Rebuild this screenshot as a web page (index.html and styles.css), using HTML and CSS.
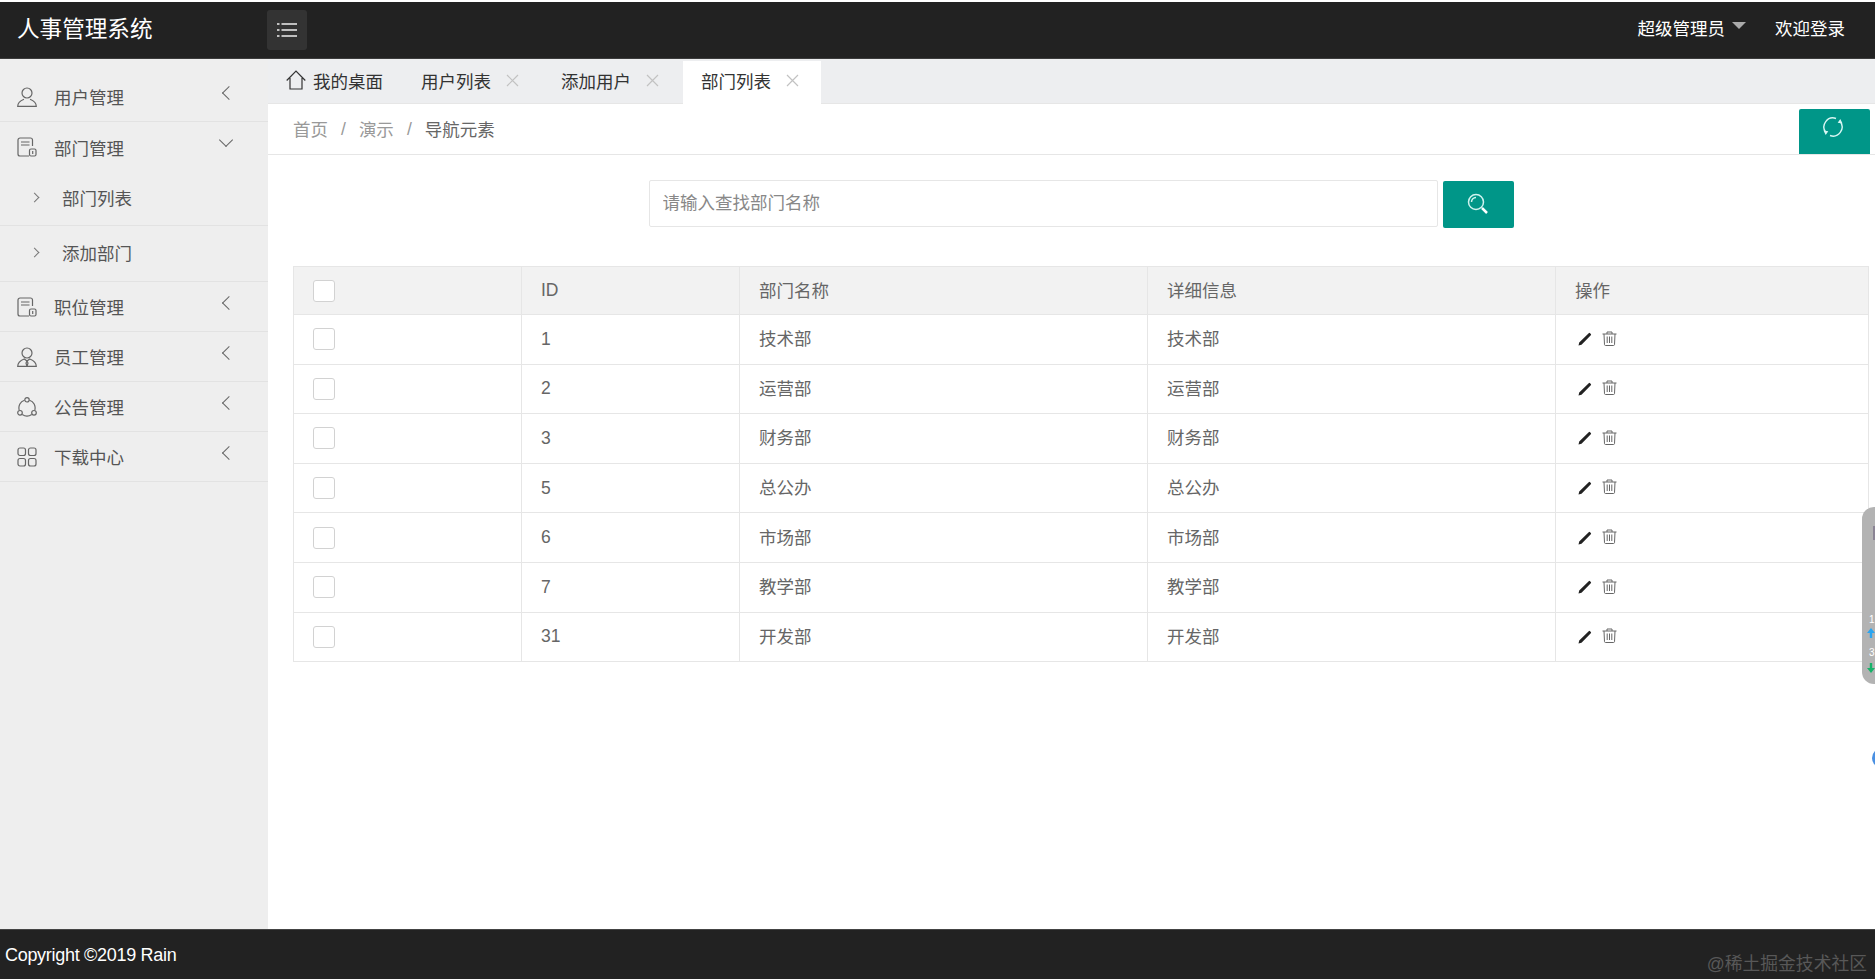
FILE: index.html
```html
<!DOCTYPE html>
<html lang="zh-CN">
  <head>
    <meta charset="UTF-8" />
    <title>人事管理系统</title>
    <link rel="stylesheet" href="styles.css">
  </head>
  <body>
    <svg class="sprite" xmlns="http://www.w3.org/2000/svg">
      <symbol id="i-user" viewBox="0 0 20 20"><circle cx="10" cy="6" r="5"/><path d="M7 12.200C3.900 13.400.7 15.400.7 19.400h18.600c0-4-3.200-6-6.300-7.200"/></symbol>
      <symbol id="i-doc" viewBox="0 0 20 20"><path d="M15.500 9V3a2 2 0 0 0-2-2H3a2 2 0 0 0-2 2v14a2 2 0 0 0 2 2h9M4 5h8.500M4 8h8.500"/><rect x="12.500" y="12" width="6.500" height="7" rx="1.500"/><path d="M15.700 14v3"/></symbol>
      <symbol id="i-staff" viewBox="0 0 20 20"><circle cx="10" cy="6" r="5"/><path d="M.7 19.400c0-4 3-6 6.500-7.400L10 14l2.800-2c3.500 1.400 6.500 3.400 6.500 7.400zM10 14l-1 2 1 3.400 1-3.400z"/></symbol>
      <symbol id="i-share" viewBox="0 0 20 20"><path d="M7.500 3.200A8 8 0 0 0 2.200 13M12.500 3.200A8 8 0 0 1 17.800 13M5.300 17.500a8 8 0 0 0 9.400 0"/><circle cx="10" cy="2.800" r="2.200"/><circle cx="3" cy="15.800" r="2.300"/><circle cx="17" cy="15.800" r="2.300"/></symbol>
      <symbol id="i-grid" viewBox="0 0 20 20"><rect x="1" y="1" width="7.500" height="7.500" rx="2"/><rect x="11.500" y="1" width="7.500" height="7.500" rx="2"/><rect x="1" y="11.500" width="7.500" height="7.500" rx="2"/><rect x="11.500" y="11.500" width="7.500" height="7.500" rx="2"/></symbol>
      <symbol id="i-close" viewBox="0 0 13 13"><path d="M1 1l11 11M12 1L1 12"/></symbol>
      <symbol id="i-pencil" viewBox="0 0 14 14"><path d="M.5 13.500l.7-3L10.700 1.200a1 1 0 0 1 1.400 0l.7.700a1 1 0 0 1 0 1.400L3.500 12.800z"/></symbol>
      <symbol id="i-trash" viewBox="0 0 15 15"><path d="M.5 3h14M5 3V1h5v2M2 3l.5 10.700a1 1 0 0 0 1 .8h8a1 1 0 0 0 1-.8L13 3M5.200 5.500v6.500M7.500 5.500v6.500M9.800 5.500v6.500"/></symbol>
    </svg>

    <header class="topbar">
      <div class="logo">人事管理系统</div>
      <button class="menu-toggle" type="button">
        <svg width="20" height="14" viewBox="0 0 20 14"><path d="M0 1h2.500M4.500 1H20M0 7h2.500M4.500 7H20M0 13h2.500M4.500 13H20"/></svg>
      </button>
      <div class="topbar-right">
        <span class="admin">超级管理员<i class="caret"></i></span>
        <span>欢迎登录</span>
      </div>
    </header>

    <div class="main">
      <aside class="sidebar">
        <ul class="nav">
          <li class="nav-item">
            <svg class="nav-icon"><use href="#i-user"/></svg><span>用户管理</span><i class="arrow arrow-left"></i>
          </li>
          <li class="nav-item nav-open">
            <svg class="nav-icon"><use href="#i-doc"/></svg><span>部门管理</span><i class="arrow arrow-down"></i>
          </li>
          <li class="sub-item sub-first"><i class="arrow-small"></i><span>部门列表</span></li>
          <li class="sub-item sub-last"><i class="arrow-small"></i><span>添加部门</span></li>
          <li class="nav-item">
            <svg class="nav-icon"><use href="#i-doc"/></svg><span>职位管理</span><i class="arrow arrow-left"></i>
          </li>
          <li class="nav-item">
            <svg class="nav-icon"><use href="#i-staff"/></svg><span>员工管理</span><i class="arrow arrow-left"></i>
          </li>
          <li class="nav-item">
            <svg class="nav-icon"><use href="#i-share"/></svg><span>公告管理</span><i class="arrow arrow-left"></i>
          </li>
          <li class="nav-item">
            <svg class="nav-icon"><use href="#i-grid"/></svg><span>下载中心</span><i class="arrow arrow-left"></i>
          </li>
        </ul>
      </aside>

      <section class="content">
        <ul class="tabs">
          <li class="tab tab-home">
            <svg class="home-icon" width="20" height="20" viewBox="0 0 20 20"><path d="M.7 10.500L10 1l9.300 9.500M4 8v11h12V8"/></svg>我的桌面
          </li>
          <li class="tab">用户列表<svg class="tab-close"><use href="#i-close"/></svg></li>
          <li class="tab">添加用户<svg class="tab-close"><use href="#i-close"/></svg></li>
          <li class="tab tab-active">部门列表<svg class="tab-close"><use href="#i-close"/></svg></li>
        </ul>

        <div class="crumbs">
          <span class="crumb">首页</span><span class="crumb-sep">/</span>
          <span class="crumb">演示</span><span class="crumb-sep">/</span>
          <span class="crumb crumb-last">导航元素</span>
          <a class="refresh">
            <svg width="22" height="22" viewBox="0 0 22 22"><path d="M3.700 16.300A9 9 0 0 1 14 2.500M18.300 5.700A9 9 0 0 1 8 19.500"/><path class="solid" d="M1.500 14.500l4.800.8-2.600 3.700zM20.500 7.500l-4.800-.8 2.600-3.700z"/></svg>
          </a>
        </div>

        <div class="page">
          <form class="search">
            <input class="search-input" type="text" placeholder="请输入查找部门名称" />
            <button class="search-btn" type="button">
              <svg width="22" height="22" viewBox="0 0 22 22"><circle cx="9" cy="9" r="7.500"/><path class="handle" d="M15 15l5 5"/><path d="M4.500 9A4.500 4.500 0 0 1 9 4.500"/></svg>
            </button>
          </form>

          <table class="grid">
            <colgroup>
              <col class="col-check"><col class="col-id"><col class="col-text"><col class="col-text"><col>
            </colgroup>
            <thead>
              <tr>
                <th class="plain"><i class="check"></i></th>
                <th class="plain">ID</th>
                <th>部门名称</th>
                <th>详细信息</th>
                <th>操作</th>
              </tr>
            </thead>
            <tbody>
              <tr>
                <td class="plain"><i class="check"></i></td><td class="plain">1</td><td>技术部</td><td>技术部</td>
                <td class="actions plain"><svg class="icon-edit"><use href="#i-pencil"/></svg><svg class="icon-del"><use href="#i-trash"/></svg></td>
              </tr>
              <tr>
                <td class="plain"><i class="check"></i></td><td class="plain">2</td><td>运营部</td><td>运营部</td>
                <td class="actions plain"><svg class="icon-edit"><use href="#i-pencil"/></svg><svg class="icon-del"><use href="#i-trash"/></svg></td>
              </tr>
              <tr>
                <td class="plain"><i class="check"></i></td><td class="plain">3</td><td>财务部</td><td>财务部</td>
                <td class="actions plain"><svg class="icon-edit"><use href="#i-pencil"/></svg><svg class="icon-del"><use href="#i-trash"/></svg></td>
              </tr>
              <tr>
                <td class="plain"><i class="check"></i></td><td class="plain">5</td><td>总公办</td><td>总公办</td>
                <td class="actions plain"><svg class="icon-edit"><use href="#i-pencil"/></svg><svg class="icon-del"><use href="#i-trash"/></svg></td>
              </tr>
              <tr>
                <td class="plain"><i class="check"></i></td><td class="plain">6</td><td>市场部</td><td>市场部</td>
                <td class="actions plain"><svg class="icon-edit"><use href="#i-pencil"/></svg><svg class="icon-del"><use href="#i-trash"/></svg></td>
              </tr>
              <tr>
                <td class="plain"><i class="check"></i></td><td class="plain">7</td><td>教学部</td><td>教学部</td>
                <td class="actions plain"><svg class="icon-edit"><use href="#i-pencil"/></svg><svg class="icon-del"><use href="#i-trash"/></svg></td>
              </tr>
              <tr>
                <td class="plain"><i class="check"></i></td><td class="plain">31</td><td>开发部</td><td>开发部</td>
                <td class="actions plain"><svg class="icon-edit"><use href="#i-pencil"/></svg><svg class="icon-del"><use href="#i-trash"/></svg></td>
              </tr>
            </tbody>
          </table>
        </div>
      </section>
    </div>

    <footer class="footer">
      <span class="copyright">Copyright ©2019 Rain</span>
      <span class="watermark">@稀土掘金技术社区</span>
    </footer>

    <!-- browser extension widget sitting over the page edge -->
    <div class="float-panel">
      <i class="float-thumb"></i>
      <span class="float-num float-num-up">1</span>
      <svg class="float-arrow float-up" viewBox="0 0 8 10"><path d="M4 0l4 5H5.200v5H2.800V5H0z"/></svg>
      <span class="float-num float-num-down">3</span>
      <svg class="float-arrow float-down" viewBox="0 0 8 10"><path d="M4 10L0 5h2.800V0h2.400v5H8z"/></svg>
    </div>
    <div class="float-dot"></div>
  </body>
</html>
```

FILE: styles.css
```css
* {
  margin: 0;
  padding: 0;
  box-sizing: border-box;
}

body {
  font-family: "Liberation Sans", "Noto Sans CJK SC", sans-serif;
  font-size: 17.5px;
  color: #666;
  background: #fff;
  height: 979px;
  padding-top: 2px;
  display: flex;
  flex-direction: column;
  overflow: hidden;
  position: relative;
}

ul {
  list-style: none;
}

i {
  font-style: normal;
}

.sprite {
  display: none;
}

/* top bar */
.topbar {
  height: 57px;
  flex-shrink: 0;
  background: #222;
  border-bottom: 1px solid #3c3c3c;
  display: flex;
  align-items: center;
  color: #fff;
}

.logo {
  width: 267px;
  padding: 0 0 5px 17px;
  font-size: 22.600px;
}

.menu-toggle {
  width: 40px;
  height: 40px;
  border: none;
  border-radius: 3px;
  background: #333;
  display: flex;
  align-items: center;
  justify-content: center;
}

.menu-toggle path {
  stroke: #eee;
  stroke-width: 1.500;
  fill: none;
}

.topbar-right {
  margin-left: auto;
  padding: 0 30px 5px 0;
  display: flex;
  align-items: center;
  gap: 29px;
}

.admin {
  display: flex;
  align-items: center;
}

.caret {
  width: 0;
  height: 0;
  margin: -4px 0 0 7px;
  border-left: 7px solid transparent;
  border-right: 7px solid transparent;
  border-top: 7px solid #aaa;
}

.main {
  flex: 1;
  min-height: 0;
  display: flex;
}

/* sidebar */
.sidebar {
  width: 268px;
  flex-shrink: 0;
  background: #eee;
  padding-top: 13px;
}

.nav-item {
  height: 50px;
  border-bottom: 1px solid #e2e2e2;
  display: flex;
  align-items: center;
  padding-left: 17px;
  color: #555;
}

.nav-open {
  border-bottom: none;
}

.nav-icon {
  width: 20px;
  height: 20px;
  margin-right: 17px;
  fill: none;
  stroke: #666;
  stroke-width: 1.200;
}

.arrow {
  width: 10px;
  height: 10px;
  margin-left: auto;
  border-left: 1.200px solid #666;
  border-bottom: 1.200px solid #666;
}

.arrow-left {
  margin-right: 34px;
  margin-bottom: 7px;
  transform: rotate(45deg);
}

.arrow-down {
  margin-right: 37px;
  margin-bottom: 14px;
  transform: rotate(-45deg);
}

.sub-item {
  display: flex;
  align-items: center;
  padding: 0 0 2px 62px;
  position: relative;
  color: #555;
  border-bottom: 1px solid #e2e2e2;
}

.sub-first {
  height: 54px;
}

.sub-last {
  height: 56px;
}

.arrow-small {
  position: absolute;
  left: 31px;
  width: 7px;
  height: 7px;
  border-right: 1.200px solid #777;
  border-top: 1.200px solid #777;
  transform: rotate(45deg);
}

/* tabs */
.content {
  flex: 1;
  min-width: 0;
  display: flex;
  flex-direction: column;
}

.tabs {
  height: 45px;
  flex-shrink: 0;
  background: #edeef0;
  border-bottom: 1px solid #e6e6e6;
  padding: 2px 0 0 0;
  display: flex;
  gap: 2px;
}

.tab {
  height: 43px;
  padding: 0 22px 5px 18px;
  display: flex;
  align-items: center;
  color: #333;
}

.tab-home {
  padding-right: 18px;
}

.home-icon {
  margin-right: 7px;
  fill: none;
  stroke: #333;
  stroke-width: 1.200;
}

.tab-close {
  width: 13px;
  height: 13px;
  margin-left: 15px;
  fill: none;
  stroke: #c2c2c2;
  stroke-width: 1.200;
}

.tab-active {
  background: #fff;
}

/* breadcrumb */
.crumbs {
  height: 51px;
  flex-shrink: 0;
  border-bottom: 1px solid #e6e6e6;
  padding: 0 5px 2px 25px;
  display: flex;
  align-items: center;
  color: #999;
}

.crumb-sep {
  margin: 2px 13px 0;
  color: #999;
}

.crumb-last {
  color: #666;
}

.refresh {
  width: 71px;
  height: 45px;
  margin-left: auto;
  margin-bottom: -2px;
  align-self: flex-end;
  background: #009688;
  border-radius: 2px 2px 0 0;
  display: flex;
  align-items: center;
  justify-content: center;
  padding: 0 3px 9px 0;
}

.refresh svg {
  fill: none;
  stroke: #d8f6f3;
  stroke-width: 1.400;
}

.refresh .solid {
  fill: #d8f6f3;
  stroke: none;
}

/* page body */
.page {
  padding: 25px 6px 0 25px;
}

.search {
  display: flex;
  justify-content: center;
  gap: 5px;
}

.search-input {
  width: 789px;
  height: 47px;
  padding-left: 13px;
  border: 1px solid #e6e6e6;
  border-radius: 2px;
  font: inherit;
  color: #666;
}

.search-input::placeholder {
  color: #888;
}

.search-btn {
  width: 71px;
  height: 47px;
  margin-top: 1px;
  border: none;
  border-radius: 2px;
  background: #009688;
  display: flex;
  align-items: center;
  justify-content: center;
}

.search-btn svg {
  fill: none;
  stroke: #cff3ef;
  stroke-width: 1.500;
  margin: 0 1px 2px 0;
}

.search-btn .handle {
  stroke: #fff;
  stroke-width: 2.500;
}

.grid {
  width: 1576px;
  margin-top: 38px;
  table-layout: fixed;
  border-collapse: collapse;
}

.col-check {
  width: 228px;
}

.col-id {
  width: 218px;
}

.col-text {
  width: 408px;
}

.grid th,
.grid td {
  height: 49.600px;
  padding: 0 19px 3px;
  border: 1px solid #e6e6e6;
  font-weight: 400;
  text-align: left;
  vertical-align: middle;
  color: #666;
}

.grid th {
  height: 48px;
  background: #f2f2f2;
}

.grid .plain {
  padding-bottom: 0;
}

.check {
  display: block;
  width: 22px;
  height: 22px;
  background: #fff;
  border: 1px solid #d2d2d2;
  border-radius: 3px;
}

.actions svg {
  vertical-align: middle;
}

.icon-edit {
  width: 14px;
  height: 14px;
  margin: -2px 10px 0 3px;
  fill: #222;
}

.icon-del {
  width: 15px;
  height: 15px;
  margin-top: -4px;
  fill: none;
  stroke: #666;
  stroke-width: 1;
}

/* footer */
.footer {
  height: 50px;
  flex-shrink: 0;
  background: #222;
  border-top: 1px solid #444;
  padding: 0 8px 0 5px;
  display: flex;
  align-items: center;
  justify-content: space-between;
  color: #fff;
}

.copyright {
  margin-top: 1px;
  font-size: 18px;
  letter-spacing: -0.300px;
}

.watermark {
  margin-top: 14px;
  font-size: 17.800px;
  color: #585858;
}

/* overlay widget at the right edge */
.float-panel {
  position: absolute;
  right: 0;
  top: 507px;
  width: 13px;
  height: 177px;
  background: #b3b3b3;
  border-radius: 12px 0 0 12px;
  overflow: hidden;
}

.float-thumb {
  position: absolute;
  left: 11px;
  top: 19px;
  width: 2px;
  height: 14px;
  background: #8b8494;
}

.float-num {
  position: absolute;
  left: 7px;
  font-size: 10px;
  color: #fff;
}

.float-num-up {
  top: 107px;
}

.float-num-down {
  top: 140px;
}

.float-arrow {
  position: absolute;
  left: 5px;
  width: 8px;
  height: 10px;
}

.float-up {
  top: 121px;
  fill: #2ba5f0;
}

.float-down {
  top: 156px;
  fill: #17b26a;
}

.float-dot {
  position: absolute;
  right: -17px;
  top: 748px;
  width: 20px;
  height: 20px;
  border-radius: 50%;
  background: #4a90e2;
}
```
